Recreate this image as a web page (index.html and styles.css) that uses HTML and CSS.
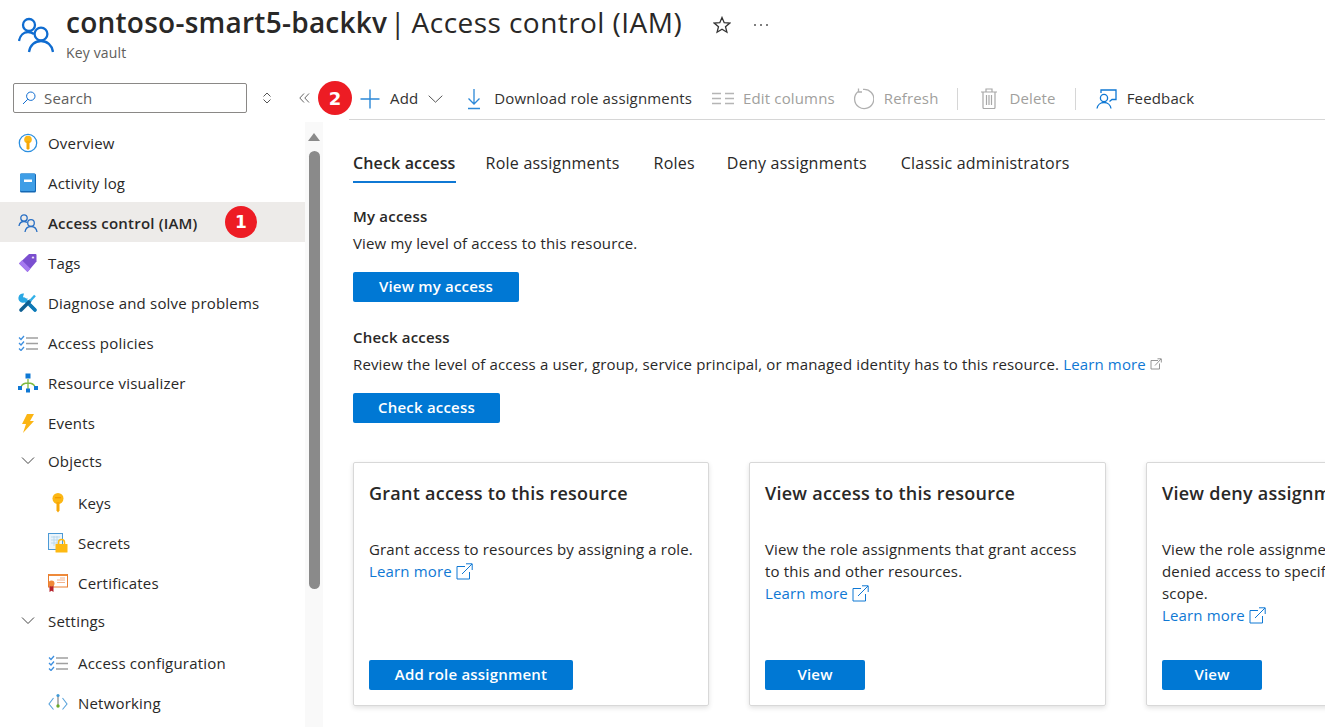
FILE: index.html
```html
<!DOCTYPE html>
<html lang="en">
<head>
    <meta charset="UTF-8">
    <meta name="viewport" content="width=device-width, initial-scale=1.0">
    <title>contoso-smart5-backkv | Access control (IAM)</title>
    <link rel="stylesheet" href="styles.css">
</head>
<body>
    <header class="page-header">
        <svg class="header-icon" width="36" height="38" viewBox="0 0 36 38" fill="none" stroke="#0f6cd0" stroke-width="2.3">
            <circle cx="11" cy="9" r="6"/>
            <path d="M1 25c1-6 5-9 9-9 2 0 4 .5 6 2"/>
            <circle cx="23" cy="18" r="6.4"/>
            <path d="M11 36c1-7 6-11 12-11s11 4 12 11"/>
        </svg>
        <div>
            <h1 class="page-title"><b>contoso-smart5-backkv</b> <span class="title-bar">|</span> Access control (IAM)</h1>
            <div class="page-subtitle">Key vault</div>
        </div>
        <svg class="star" width="18" height="18" viewBox="0 0 18 18" fill="none" stroke="#333" stroke-width="1.3"><path d="M9 1.5l2.2 5.2 5.6.4-4.3 3.6 1.4 5.5L9 13.2l-4.9 3 1.4-5.5L1.2 7.1l5.6-.4z"/></svg>
        <svg class="more" width="16" height="4" viewBox="0 0 16 4" fill="#555"><circle cx="2" cy="2" r="1"/><circle cx="8" cy="2" r="1"/><circle cx="14" cy="2" r="1"/></svg>
    </header>

    <div class="layout">
        <aside class="sidebar">
            <div class="search-row">
                <div class="search-box">
                    <svg width="14" height="14" viewBox="0 0 14 14" fill="none" stroke="#0f6cd0" stroke-width="1"><circle cx="8.8" cy="5.2" r="4.2"/><path d="M5.8 8.2L1 13"/></svg>
                    <span>Search</span>
                </div>
                <svg class="sort-icon" width="10" height="12" viewBox="0 0 10 12" fill="none" stroke="#555" stroke-width="1"><path d="M1.5 4.5L5 1l3.500 3.500M1.500 7.500L5 11l3.500-3.500"/></svg>
                <svg class="collapse-icon" width="11" height="10" viewBox="0 0 11 10" fill="none" stroke="#666" stroke-width="1"><path d="M5 .5L.8 5 5 9.500M10 .5L5.800 5 10 9.500"/></svg>
            </div>
            <div class="menu-wrap">
                <nav class="menu">
                    <a class="menu-item">
                        <svg width="20" height="20" viewBox="0 0 20 20"><circle cx="10" cy="10" r="8.700" fill="#fff" stroke="#2b8fe0" stroke-width="1.300"/><circle cx="10" cy="6.500" r="3.800" fill="#fcb714"/><path d="M8.500 8h3v7.500l-1.500 1.500-1.500-1.500z" fill="#f7a707"/></svg>
                        Overview
                    </a>
                    <a class="menu-item">
                        <svg width="20" height="20" viewBox="0 0 20 20"><rect x="2" y=".5" width="16" height="19" rx="1.500" fill="#1468b4"/><rect x="2" y=".5" width="15" height="17.500" rx="1" fill="#3f9ee6"/><rect x="6" y="6.500" width="8" height="2.500" fill="#fff"/></svg>
                        Activity log
                    </a>
                    <a class="menu-item active">
                        <svg width="20" height="20" viewBox="0 0 20 20" fill="none" stroke="#2a70c4" stroke-width="1.300"><circle cx="6" cy="5" r="3.200"/><path d="M1 13c.5-3 2.500-4.500 5-4.500 1 0 2 .3 3 1"/><circle cx="13" cy="10" r="3.300"/><path d="M7 19c.5-3.500 3-5.500 6-5.500s5.500 2 6 5.500"/></svg>
                        Access control (IAM)
                        <span class="badge badge-menu">1</span>
                    </a>
                    <a class="menu-item">
                        <svg width="20" height="20" viewBox="0 0 20 20"><path d="M11 1h6.500a1 1 0 0 1 1 1v6.500L9.500 19 1 10.500z" fill="#7b4fd0"/><path d="M1 10.500L9.500 19l3-3.300-8.500-8.500z" fill="#a67af0"/><circle cx="15" cy="4.500" r="1.500" fill="#e8dcfb" stroke="#5c2fb0" stroke-width=".5"/></svg>
                        Tags
                    </a>
                    <a class="menu-item">
                        <svg width="20" height="20" viewBox="0 0 20 20" fill="none"><path d="M6 6l11 11" stroke="#2aa8e4" stroke-width="3.400" stroke-linecap="round"/><path d="M6 .6A4.600 4.600 0 1 0 9.600 5.200L6.600 6 5 4z" fill="#2aa8e4"/><path d="M12 12l5 5" stroke="#0f78b4" stroke-width="3.400" stroke-linecap="round"/><path d="M3 17l8.500-8.500" stroke="#0f5f92" stroke-width="3.600" stroke-linecap="round"/><path d="M12 8l5-5.500" stroke="#32b0e8" stroke-width="2.400"/></svg>
                        Diagnose and solve problems
                    </a>
                    <a class="menu-item">
                        <svg width="20" height="16" viewBox="0 0 20 16" fill="none"><path d="M1 2.500l2 2 3-3.500M1 8l2 2 3-3.500M1 13.500l2 2 3-3.500" stroke="#3c8fe0" stroke-width="1.300"/><path d="M8 3h12M8 8.500h12M8 14h12" stroke="#a0a0a0" stroke-width="1.600"/></svg>
                        Access policies
                    </a>
                    <a class="menu-item">
                        <svg width="20" height="20" viewBox="0 0 20 20"><path d="M10 6v10M3 14c1-3 4-4 7-4s6 1 7 4" fill="none" stroke="#7fba42" stroke-width="1.300"/><rect x="7.500" y=".5" width="5" height="5" fill="#0f78d4"/><rect x="0" y="13" width="4" height="4" fill="#0f78d4"/><rect x="16" y="13" width="4" height="4" fill="#0f78d4"/><rect x="8" y="15.500" width="4" height="4" fill="#0f78d4"/></svg>
                        Resource visualizer
                    </a>
                    <a class="menu-item">
                        <svg width="20" height="20" viewBox="0 0 20 20"><path d="M9 1h7l-4 7h4L5 20l3-9H4z" fill="#fbb514"/></svg>
                        Events
                    </a>
                    <div class="menu-group">
                        <svg width="14" height="8" viewBox="0 0 14 8" fill="none" stroke="#444" stroke-width="1"><path d="M1 .5l6 6 6-6"/></svg>
                        Objects
                    </div>
                    <a class="menu-item sub">
                        <svg width="20" height="20" viewBox="0 0 20 20"><circle cx="10" cy="5.500" r="5.500" fill="#fcb714"/><path d="M8.500 9h3v8.500L10 19.500l-1.500-2z" fill="#f7a707"/><rect x="7" y="4" width="6" height="1.300" fill="#f09a00"/></svg>
                        Keys
                    </a>
                    <a class="menu-item sub">
                        <svg width="20" height="20" viewBox="0 0 20 20"><rect x=".5" y=".5" width="14" height="16" fill="#eaf4fb" stroke="#4c9ad6"/><path d="M3 4h9M3 7h9M3 10h9M6 3v10M9 3v10" stroke="#b4d4ea" stroke-width=".8"/><rect x="7.500" y="11" width="12" height="8.500" rx=".5" fill="#fdb913"/><path d="M10.500 11V9.500a3 3 0 0 1 6 0V11" fill="none" stroke="#fdb913" stroke-width="1.500"/></svg>
                        Secrets
                    </a>
                    <a class="menu-item sub">
                        <svg width="20" height="20" viewBox="0 0 20 20"><rect x=".5" y="1.500" width="19" height="12.500" fill="#fff" stroke="#e87d2e"/><rect x="1" y="1" width="18" height="2" fill="#ee8a3a"/><path d="M9 7h8M9 9.500h8M12 5h5" stroke="#f0a070" stroke-width=".8"/><path d="M1.500 12h4v7l-2-1.300-2 1.300z" fill="#b5202b"/><circle cx="3.500" cy="10.500" r="3" fill="#f08838"/></svg>
                        Certificates
                    </a>
                    <div class="menu-group">
                        <svg width="14" height="8" viewBox="0 0 14 8" fill="none" stroke="#444" stroke-width="1"><path d="M1 .5l6 6 6-6"/></svg>
                        Settings
                    </div>
                    <a class="menu-item sub">
                        <svg width="20" height="16" viewBox="0 0 20 16" fill="none"><path d="M1 2.500l2 2 3-3.500M1 8l2 2 3-3.500M1 13.500l2 2 3-3.500" stroke="#3c8fe0" stroke-width="1.300"/><path d="M8 3h12M8 8.500h12M8 14h12" stroke="#a0a0a0" stroke-width="1.600"/></svg>
                        Access configuration
                    </a>
                    <a class="menu-item sub">
                        <svg width="20" height="20" viewBox="0 0 20 20" fill="none"><path d="M5.500 7L1 13l4.500 5.500M14.500 7L19 13l-4.500 5.500" stroke="#5ba4dc" stroke-width="1.100" transform="translate(0 -2)"/><path d="M10 3v11" stroke="#777" stroke-width="1.100"/><circle cx="10" cy="2.500" r="1.600" fill="#3f9ad8"/><circle cx="10" cy="13" r="1.700" fill="#6aaa2a"/></svg>
                        Networking
                    </a>
                </nav>
                <div class="scroll-rail">
                    <span class="scroll-arrow"></span>
                    <span class="scroll-thumb"></span>
                </div>
            </div>
        </aside>

        <main class="main">
            <span class="badge badge-toolbar">2</span>
            <div class="toolbar">
                <span class="tool tool-add">
                    <svg width="20" height="20" viewBox="0 0 20 20" stroke="#2b88d8" stroke-width="1.400"><path d="M10 .5v19M.5 10h19"/></svg>
                    <span class="tool-label">Add</span>
                    <svg class="tool-chevron" width="15" height="8" viewBox="0 0 15 8" fill="none" stroke="#555" stroke-width="1"><path d="M.7.700l6.800 6.500L14.300.700"/></svg>
                </span>
                <span class="tool tool-download">
                    <svg width="16" height="22" viewBox="0 0 16 22" fill="none" stroke="#2b88d8" stroke-width="1.300"><path d="M8 1v15M2.500 10.500L8 16l5.500-5.500M2 20.500h12"/></svg>
                    <span class="tool-label">Download role assignments</span>
                </span>
                <span class="tool tool-columns disabled">
                    <svg width="22" height="13" viewBox="0 0 22 13" stroke="#b5b5b5" stroke-width="1.300"><path d="M0 1.500h9M0 6.500h9M0 11.500h9M13 1.500h9M13 6.500h9M13 11.500h9"/></svg>
                    <span class="tool-label">Edit columns</span>
                </span>
                <span class="tool tool-refresh disabled">
                    <svg width="22" height="22" viewBox="0 0 22 22" fill="none" stroke="#b0b0b0" stroke-width="1.300"><path d="M6.500 3.200A9.600 9.600 0 1 0 11 1.400M6.500 .5v3.500H10"/></svg>
                    <span class="tool-label">Refresh</span>
                </span>
                <span class="tool-sep sep-first"></span>
                <span class="tool tool-delete disabled">
                    <svg width="16" height="21" viewBox="0 0 16 21" fill="none" stroke="#a8a8a8" stroke-width="1.200"><path d="M0 4h16M2 4v15.500a1 1 0 0 0 1 1h10a1 1 0 0 0 1-1V4M5 4V1h6v3M5.500 7v10M8 7v10M10.500 7v10"/></svg>
                    <span class="tool-label">Delete</span>
                </span>
                <span class="tool-sep sep-second"></span>
                <span class="tool tool-feedback">
                    <svg width="21" height="20" viewBox="0 0 21 20" fill="none" stroke="#0f78d4" stroke-width="1.300"><path d="M5 4V1h15v9.500h-4l-2.500 2"/><circle cx="8" cy="9" r="3.600"/><path d="M1 19.500c.5-3.500 3.500-6 7-6s6.500 2.500 7 6"/></svg>
                    <span class="tool-label">Feedback</span>
                </span>
            </div>

            <div class="content">
                <div class="tabs">
                    <span class="tab tab-active">Check access</span>
                    <span class="tab">Role assignments</span>
                    <span class="tab">Roles</span>
                    <span class="tab tab-deny">Deny assignments</span>
                    <span class="tab">Classic administrators</span>
                </div>

                <section class="access-block">
                    <h2>My access</h2>
                    <p>View my level of access to this resource.</p>
                    <button class="btn btn-my">View my access</button>
                </section>

                <section class="access-block">
                    <h2>Check access</h2>
                    <p>Review the level of access a user, group, service principal, or managed identity has to this resource. <a class="link">Learn more <svg width="12" height="12" viewBox="0 0 12 12" fill="none" stroke="#8a8a8a" stroke-width=".9"><path d="M8 2.500H1v8.500h8.500V5.500M5 7.500L11 1M7.500 .8H11.300V4.500"/></svg></a></p>
                    <button class="btn btn-check">Check access</button>
                </section>

                <div class="cards">
                    <div class="card">
                        <h3>Grant access to this resource</h3>
                        <p>Grant access to resources by assigning a role.<br>
                        <a class="link">Learn more <svg width="17" height="17" viewBox="0 0 17 17" fill="none" stroke="#0f78d4" stroke-width="1"><path d="M9 3.500H1v12.500h12.500V9M6 11l10-10M10 .8h6.200V7"/></svg></a></p>
                        <button class="btn btn-card-wide">Add role assignment</button>
                    </div>
                    <div class="card card-middle">
                        <h3>View access to this resource</h3>
                        <p>View the role assignments that grant access<br>to this and other resources.<br>
                        <a class="link">Learn more <svg width="17" height="17" viewBox="0 0 17 17" fill="none" stroke="#0f78d4" stroke-width="1"><path d="M9 3.500H1v12.500h12.500V9M6 11l10-10M10 .8h6.200V7"/></svg></a></p>
                        <button class="btn btn-card">View</button>
                    </div>
                    <div class="card">
                        <h3>View deny assignments</h3>
                        <p>View the role assignments that have been<br>denied access to specific actions at this<br>scope.<br>
                        <a class="link">Learn more <svg width="17" height="17" viewBox="0 0 17 17" fill="none" stroke="#0f78d4" stroke-width="1"><path d="M9 3.500H1v12.500h12.500V9M6 11l10-10M10 .8h6.200V7"/></svg></a></p>
                        <button class="btn btn-card">View</button>
                    </div>
                </div>
            </div>
        </main>
    </div>
</body>
</html>
```

FILE: styles.css
```css
* {
    box-sizing: border-box;
}

html, body {
    margin: 0;
    padding: 0;
    height: 727px;
    overflow: hidden;
}

body {
    font-family: 'Open Sans', 'Noto Sans', sans-serif;
    font-size: 15px;
    letter-spacing: 0.15px;
    color: #292827;
    background-color: #fff;
}

svg {
    flex: none;
}

.page-header {
    display: flex;
    align-items: flex-start;
    height: 78px;
    padding: 16px 0 0 18px;
}

.header-icon {
    margin-right: 12px;
}

.page-title {
    margin: -12px 0 0;
    font-size: 28px;
    line-height: 36px;
    font-weight: 400;
    letter-spacing: 0.45px;
    white-space: nowrap;
}

.page-title b {
    font-weight: 600;
    letter-spacing: 0.25px;
}

.title-bar {
    margin: 0 -2px 0 -5px;
}

.page-subtitle {
    margin-top: 4px;
    font-size: 14px;
    line-height: 18px;
    color: #605e5c;
}

.star {
    margin: 0 0 0 31px;
}

.more {
    margin: 7px 0 0 22px;
}

.layout {
    display: flex;
    height: 649px;
}

.sidebar {
    width: 323px;
    flex: none;
}

.search-row {
    display: flex;
    align-items: center;
    height: 44px;
    padding: 5px 0 9px 13px;
}

.search-box {
    display: flex;
    align-items: center;
    gap: 8px;
    width: 234px;
    height: 30px;
    padding-left: 8px;
    border: 1px solid #8a8886;
    border-radius: 2px;
    color: #605e5c;
}

.sort-icon {
    margin-left: 15px;
}

.collapse-icon {
    margin-left: 27px;
}

.menu-wrap {
    display: flex;
    height: 605px;
}

.menu {
    width: 305px;
    flex: none;
    letter-spacing: 0.2px;
}

.menu-item {
    position: relative;
    display: flex;
    align-items: center;
    gap: 10px;
    height: 40px;
    padding: 2px 0 0 18px;
}

.menu-item.active {
    background-color: #edebe9;
    font-weight: 600;
}

.menu-item.sub {
    padding-left: 48px;
}

.menu-group {
    display: flex;
    align-items: center;
    gap: 13px;
    height: 36px;
    margin-bottom: 4px;
    padding: 2px 0 0 21px;
}

.scroll-rail {
    position: relative;
    width: 18px;
    background-color: #f9f9f9;
}

.scroll-arrow {
    position: absolute;
    top: 11px;
    left: 3px;
    border-left: 6px solid transparent;
    border-right: 6px solid transparent;
    border-bottom: 8px solid #8a8a8a;
}

.scroll-thumb {
    position: absolute;
    top: 29px;
    left: 4px;
    width: 11px;
    height: 438px;
    background-color: #8a8a8a;
    border-radius: 6px;
}

.badge {
    position: absolute;
    display: flex;
    align-items: center;
    justify-content: center;
    border-radius: 50%;
    background-color: #ed1c24;
    color: #fff;
    font-family: 'DejaVu Sans', sans-serif;
    font-weight: 700;
    letter-spacing: 0;
}

.badge-menu {
    top: 4px;
    left: 225px;
    width: 32px;
    height: 32px;
    font-size: 17px;
}

.badge-toolbar {
    top: 3px;
    left: -5px;
    width: 34px;
    height: 34px;
    font-size: 18px;
    z-index: 2;
}

.main {
    position: relative;
    flex: 1;
    min-width: 0;
}

.toolbar {
    display: flex;
    align-items: center;
    height: 42px;
    margin-left: 26px;
    padding-left: 11px;
    border-bottom: 1px solid #d6d6d6;
    white-space: nowrap;
}

.tool {
    display: flex;
    align-items: center;
    color: #323130;
}

.tool.disabled {
    color: #a19f9d;
}

.tool-label {
    margin-bottom: 2px;
}

.tool-add svg:first-child {
    margin-right: 10px;
}

.tool-chevron {
    margin-left: 10px;
}

.tool-download {
    margin-left: 23px;
}

.tool-download svg {
    margin-right: 12px;
}

.tool-columns {
    margin-left: 20px;
}

.tool-columns svg {
    margin-right: 9px;
}

.tool-refresh {
    margin-left: 17px;
}

.tool-refresh svg {
    margin-right: 10px;
}

.tool-sep {
    width: 1px;
    height: 22px;
    background-color: #d6d6d6;
}

.sep-first {
    margin-left: 18px;
}

.tool-delete {
    margin-left: 23px;
}

.tool-delete svg {
    margin-right: 13px;
}

.sep-second {
    margin-left: 19px;
}

.tool-feedback {
    margin-left: 20px;
}

.tool-feedback svg {
    margin-right: 10px;
}

.content {
    padding-left: 30px;
}

.tabs {
    display: flex;
    height: 64px;
    padding-top: 29px;
    margin-bottom: 22px;
    gap: 34px;
    font-size: 16px;
    letter-spacing: 0.23px;
    white-space: nowrap;
}

.tab {
    height: 34px;
    line-height: 28px;
}

.tab-active {
    margin-right: -4px;
    border-bottom: 2px solid #0f78d4;
    font-weight: 600;
    letter-spacing: 0.15px;
}

.tab-deny {
    margin-left: -2px;
}

.access-block {
    margin-bottom: 25px;
}

.access-block h2 {
    margin: 0;
    font-size: 15px;
    line-height: 20px;
    font-weight: 600;
    letter-spacing: 0.2px;
}

.access-block p {
    margin: 7px 0 19px;
    line-height: 20px;
    white-space: nowrap;
}

.link {
    color: #0f78d4;
}

.btn {
    display: block;
    height: 30px;
    padding: 0 0 2px;
    border: none;
    border-radius: 2px;
    background-color: #0078d4;
    color: #fff;
    font-family: inherit;
    font-size: 15px;
    font-weight: 600;
    letter-spacing: 0.2px;
}

.btn-my {
    width: 166px;
}

.btn-check {
    width: 147px;
}

.btn-card-wide {
    width: 204px;
}

.btn-card {
    width: 100px;
}

.cards {
    display: flex;
    gap: 40px;
    margin-top: 39px;
}

.card {
    position: relative;
    flex: none;
    width: 356px;
    height: 244px;
    padding: 15px 15px 0;
    border: 1px solid #d8d8d8;
    border-radius: 2px;
    box-shadow: 0 2px 5px rgba(0, 0, 0, 0.12);
}

.card-middle {
    width: 357px;
}

.card h3 {
    margin: 0 0 30px;
    font-size: 18px;
    line-height: 30px;
    font-weight: 600;
    letter-spacing: 0.25px;
    white-space: nowrap;
}

.card p {
    margin: 0;
    line-height: 22px;
    white-space: nowrap;
}

.card .link svg {
    vertical-align: -3px;
}

.card .btn {
    position: absolute;
    left: 15px;
    bottom: 15px;
}
```
